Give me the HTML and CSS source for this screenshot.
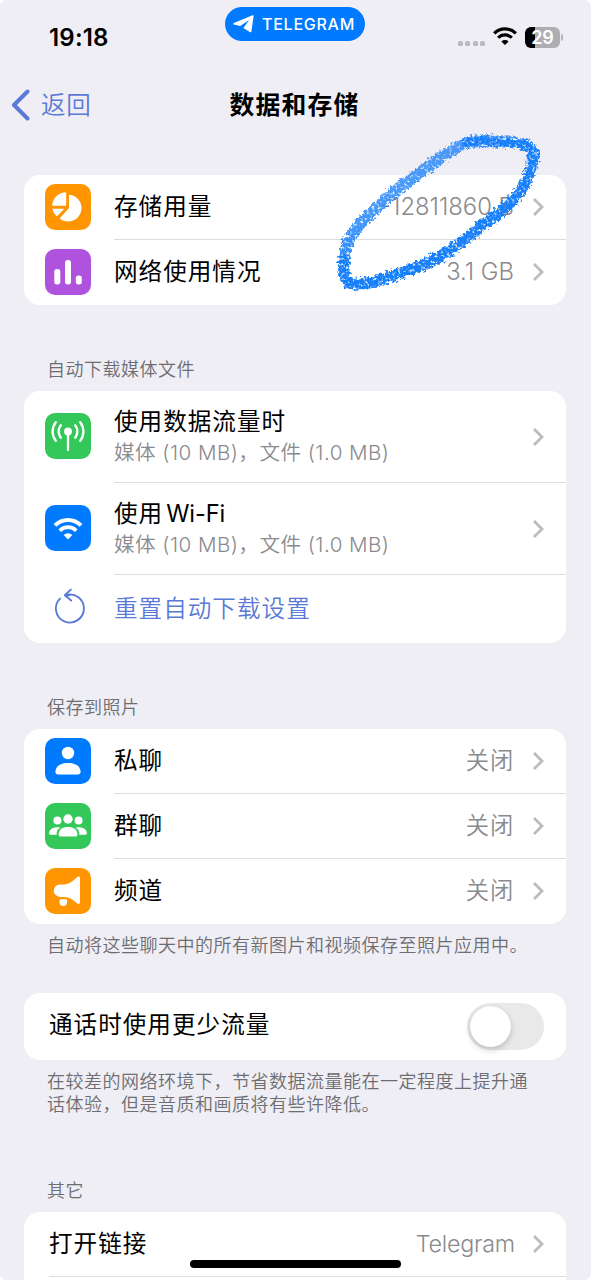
FILE: index.html
```html
<!DOCTYPE html>
<html lang="zh-CN">
<head>
<meta charset="utf-8">
<title>数据和存储</title>
<link rel="stylesheet" href="styles.css">
</head>
<body>
<svg class="defs" width="0" height="0">
  <symbol id="chev" viewBox="0 0 12 20"><path d="M2 2 L10 10 L2 18" fill="none" stroke="currentColor" stroke-width="2.8"/></symbol>
  <symbol id="wifi" viewBox="0 0 24 18">
    <path d="M1.2 6.4 A15.2 15.2 0 0 1 22.8 6.4" fill="none" stroke="currentColor" stroke-width="3.3"/>
    <path d="M5.2 10.8 A9.4 9.4 0 0 1 18.8 10.8" fill="none" stroke="currentColor" stroke-width="3.1"/>
    <path d="M12 18 L8.4 14.4 A5.2 5.2 0 0 1 15.6 14.4 Z" fill="currentColor"/>
  </symbol>
</svg>
<main class="screen">
  <header class="status">
    <time class="clock">19:18</time>
    <div class="pill">
      <svg width="21" height="18" viewBox="0 0 21 18"><path d="M19.6 .3 C20.4 0 20.7 .4 20.6 1 L18.4 16.4 C18.2 17.4 17.4 17.6 16.7 17.1 L10.4 13 L16.2 5 L7.2 11 L.9 9.6 C-.2 9.3 -.1 8.6 .9 8.1 Z" fill="#fff"/></svg>
      <span>TELEGRAM</span>
    </div>
    <div class="indicators">
      <div class="dots"><i></i><i></i><i></i><i></i></div>
      <svg class="net" width="24" height="18"><use href="#wifi"/></svg>
      <div class="battery"><span>29</span></div>
      <i class="nub"></i>
    </div>
  </header>
  <nav class="nav">
    <a class="back"><svg width="19" height="32" viewBox="0 0 19 32"><path d="M16.5 2.5 L3 16 L16.5 29.5" fill="none" stroke="currentColor" stroke-width="4" stroke-linecap="round" stroke-linejoin="round"/></svg><span>返回</span></a>
    <h1>数据和存储</h1>
  </nav>

  <section class="card">
    <div class="row">
      <svg class="icon orange" viewBox="0 0 46 46">
        <path d="M24 24 V10.7 A13.4 13.4 0 1 1 14.6 34.4 Z" fill="#fff"/>
        <path d="M21.2 21.7 H7.2 A14 14 0 0 1 21.2 8.2 Z" fill="#fff"/>
        <path d="M19.3 24.8 L11.8 32.6 A14 14 0 0 1 7.3 24.8 Z" fill="#fff"/>
      </svg>
      <div class="body"><span class="label">存储用量</span><span class="value num">-12811860 B</span><svg class="chev"><use href="#chev"/></svg></div>
    </div>
    <div class="row">
      <svg class="icon purple" viewBox="0 0 46 46"><g fill="#fff"><rect x="9.3" y="20" width="6" height="15.5" rx="2.7"/><rect x="20" y="11" width="6" height="24.5" rx="2.7"/><rect x="30.8" y="26.5" width="6" height="9" rx="2.7"/></g></svg>
      <div class="body"><span class="label">网络使用情况</span><span class="value num">3.1 GB</span><svg class="chev"><use href="#chev"/></svg></div>
    </div>
  </section>

  <h2 class="caption">自动下载媒体文件</h2>
  <section class="card">
    <div class="row tall">
      <svg class="icon green" viewBox="0 0 46 46">
        <circle cx="23" cy="18.5" r="3.9" fill="#fff"/>
        <g fill="none" stroke="#fff" stroke-width="2.3" stroke-linecap="round"><path d="M23 20 V37"/><path d="M15.8 12.3 A10 10 0 0 0 15.8 24.7"/><path d="M30.2 12.3 A10 10 0 0 1 30.2 24.7"/><path d="M10.8 9.2 A15 15 0 0 0 10.8 27.8"/><path d="M35.2 9.2 A15 15 0 0 1 35.2 27.8"/></g>
      </svg>
      <div class="body"><div class="stack"><span class="label">使用数据流量时</span><span class="detail">媒体 (10 MB)，文件 (1.0 MB)</span></div><svg class="chev"><use href="#chev"/></svg></div>
    </div>
    <div class="row tall">
      <svg class="icon blue" viewBox="0 0 46 46"><use href="#wifi" x="8.5" y="12.5" width="29" height="22" color="#fff"/></svg>
      <div class="body"><div class="stack"><span class="label">使用<span class="latin">Wi-Fi</span></span><span class="detail">媒体 (10 MB)，文件 (1.0 MB)</span></div><svg class="chev"><use href="#chev"/></svg></div>
    </div>
    <div class="row reset">
      <svg class="icon" viewBox="0 0 46 46"><g fill="none" stroke="#5b7ad6" stroke-width="1.9" stroke-linecap="round" stroke-linejoin="round"><path d="M15 13.6 A14 14 0 1 0 20.5 10.2 H24.5"/><path d="M25.8 4.6 L19.8 10.2 L26.2 15.6"/></g></svg>
      <div class="body"><span class="label link">重置自动下载设置</span></div>
    </div>
  </section>

  <h2 class="caption">保存到照片</h2>
  <section class="card">
    <div class="row">
      <svg class="icon blue" viewBox="0 0 46 46"><g fill="#fff"><circle cx="23" cy="15" r="6.2"/><path d="M10.4 33.6 C10.8 27.6 16.2 25 23 25 S35.2 27.6 35.6 33.6 C35.7 35.6 34.6 36.5 32.6 36.5 H13.4 C11.4 36.5 10.3 35.6 10.4 33.6 Z"/></g></svg>
      <div class="body"><span class="label">私聊</span><span class="value cjk">关闭</span><svg class="chev"><use href="#chev"/></svg></div>
    </div>
    <div class="row">
      <svg class="icon green" viewBox="0 0 46 46"><g fill="#fff"><circle cx="12.4" cy="17.6" r="4"/><circle cx="33.6" cy="17.6" r="4"/><circle cx="23" cy="16" r="4.7"/><path d="M13.6 31.4 C13.6 26.5 17.3 24 23 24 S32.4 26.5 32.4 31.4 C32.4 32.8 31.6 33.5 30.2 33.5 H15.8 C14.4 33.5 13.6 32.8 13.6 31.4 Z"/><path d="M11.7 31.8 H6 C4.6 31.8 4 31.2 4.1 30 C4.4 26.4 7.5 24.2 12.4 24.2 Q14.2 24.2 15.6 24.6 C12.8 26 11.5 28.3 11.7 31.8 Z"/><path d="M34.3 31.8 H40 C41.4 31.8 42 31.2 41.9 30 C41.6 26.4 38.5 24.2 33.6 24.2 Q31.8 24.2 30.4 24.6 C33.2 26 34.5 28.3 34.3 31.8 Z"/></g></svg>
      <div class="body"><span class="label">群聊</span><span class="value cjk">关闭</span><svg class="chev"><use href="#chev"/></svg></div>
    </div>
    <div class="row">
      <svg class="icon orange" viewBox="0 0 46 46"><g fill="#fff"><path d="M15 16.4 H19.5 C24 16.4 28.5 12.7 32 9.3 C33.4 8 35 8.4 35 10.4 V34 C35 36 33.4 36.6 32 35.2 C28.5 31.8 24 28.9 19.5 28.9 H15 A6.2 6.2 0 0 1 15 16.4 Z"/><path d="M15.6 31.2 H20.6 C21.5 31.2 22 31.7 22 32.6 V34.2 A3.7 3.7 0 0 1 14.6 34.2 V32.4 Q14.6 31.2 15.6 31.2 Z"/></g></svg>
      <div class="body"><span class="label">频道</span><span class="value cjk">关闭</span><svg class="chev"><use href="#chev"/></svg></div>
    </div>
  </section>
  <p class="note">自动将这些聊天中的所有新图片和视频保存至照片应用中。</p>

  <section class="card calls">
    <div class="row plain"><div class="body"><span class="label">通话时使用更少流量</span><div class="switch"><i></i></div></div></div>
  </section>
  <p class="note">在较差的网络环境下，节省数据流量能在一定程度上提升通<br>话体验，但是音质和画质将有些许降低。</p>

  <h2 class="caption other">其它</h2>
  <section class="card last">
    <div class="row plain"><div class="body"><span class="label">打开链接</span><span class="value word">Telegram</span><svg class="chev"><use href="#chev"/></svg></div></div>
    <div class="row plain"><div class="body"></div></div>
  </section>

  <svg class="scribble" width="591" height="320" viewBox="0 0 591 320">
    <defs>
      <filter id="crayon" x="-10%" y="-10%" width="120%" height="120%" color-interpolation-filters="sRGB">
        <feTurbulence type="fractalNoise" baseFrequency="0.35" numOctaves="3" seed="4" result="n"/>
        <feDisplacementMap in="SourceGraphic" in2="n" scale="9" xChannelSelector="R" yChannelSelector="G" result="d"/>
        <feColorMatrix in="n" type="matrix" values="0 0 0 0 0  0 0 0 0 0  0 0 0 0 0  0 0 3.5 0 -0.6" result="m"/>
        <feComposite in="d" in2="m" operator="in"/>
        <feGaussianBlur stdDeviation="0.5"/>
      </filter>
      <linearGradient id="ink" gradientUnits="userSpaceOnUse" x1="400" y1="170" x2="440" y2="235"><stop offset="0" stop-color="#1a80fa" stop-opacity=".75"/><stop offset="1" stop-color="#1a80fa"/></linearGradient>
    </defs>
    <g transform="translate(1 1)" filter="url(#crayon)" fill="none" stroke-linecap="round" stroke-linejoin="round">
      <path stroke="url(#ink)" stroke-width="11.5" d="M465 142 C445 151 436 159 420 171 C405 182 388 193 374 209 C356 224 344 239 343 258 C342 273 343 282 353 283 C368 284 389 276 411 268 C438 259 461 242 479 226 C499 213 514 199 523 184 C530 174 532 161 532 153 C531 143 515 141 499 141 C485 140 474 139 465 142"/>
      <path stroke="#1680fc" stroke-width="8.5" d="M465 142 C475 138 485 141 499 141 C515 141 531 143 532 153 C532 161 530 174 523 184 M343 258 C342 273 343 282 353 283 C368 284 389 276 411 268"/>
    </g>
  </svg>
  <div class="home"></div>
</main>
</body>
</html>
```
FILE: styles.css
```css
* { box-sizing: border-box; }
html { background: #fff; }
body { margin: 0; font-family: Inter, "Noto Sans CJK SC", sans-serif; color: #000; overflow: hidden; }
.defs { position: absolute; }
.screen { position: relative; width: 591px; height: 1280px; background: #efeef5; border-radius: 6px; overflow: hidden; padding: 0 25px 0 24px; }
h1, h2, p { margin: 0; font-weight: 400; }

.status { height: 75px; margin: 0 -25px 0 -24px; display: grid; grid-template-columns: 225px 140px 1fr; align-items: start; }
.clock { padding: 23px 0 0 49px; font-size: 24px; line-height: 30px; font-weight: 600; letter-spacing: .2px; }
.pill { margin-top: 7px; height: 34px; border-radius: 17px; background: #007aff; color: #fff; display: flex; align-items: center; gap: 8px; padding-left: 8px; font-size: 16px; font-weight: 500; letter-spacing: .75px; }
.indicators { display: flex; justify-content: flex-end; padding: 27px 28px 0 0; height: 48px; }
.dots { display: flex; gap: 2.5px; padding: 14px 8px 0 0; }
.dots i { width: 5px; height: 5px; border-radius: 1.5px; background: #b9b9be; }
.net { margin: 0 8px 0 0; }
.battery { width: 35px; height: 21px; border-radius: 6px; background: linear-gradient(90deg, #000 10px, #aeaeb2 10px); color: #fff; font-size: 18px; font-weight: 600; line-height: 21px; text-align: center; }
.nub { width: 2px; height: 7px; margin: 7px 0 0 1px; border-radius: 0 2px 2px 0; background: #b6b6ba; }

.nav { height: 100px; margin: 0 -25px 0 -24px; display: grid; grid-template-columns: 1fr auto 1fr; align-items: start; padding-top: 14px; }
.back { display: flex; align-items: center; gap: 11px; padding-left: 11px; height: 32px; color: #5b7ad6; font-size: 24.5px; line-height: 28px; letter-spacing: .8px; font-weight: 350; }
.back span { margin-top: -1px; }
h1 { font-size: 24.8px; line-height: 32px; font-weight: 600; letter-spacing: 1.2px; grid-column: 2; margin-left: -2px; }

.card { background: #fff; border-radius: 16px; overflow: hidden; }
.row { height: 65px; display: flex; align-items: center; padding-left: 21px; }
.row.tall { height: 92px; }
.row.reset { height: 68px; }
.icon { width: 46px; height: 46px; border-radius: 10px; margin: 0 23px 2px 0; flex: none; }
.orange { background: #ff9500; }
.purple { background: #af52de; }
.green { background: #34c759; }
.blue { background: #007aff; }
.body { flex: 1; align-self: stretch; display: flex; align-items: center; padding-right: 22px; border-bottom: 1px solid #dddde0; }
.row:last-child .body { border-bottom: 0; padding-bottom: 1px; }
.label { font-size: 23.6px; line-height: 34px; letter-spacing: 1px; margin-right: auto; }
.latin { letter-spacing: -.1px; margin-left: 3px; }
.link { color: #5b7ad6; font-weight: 350; }
.value { font-size: 23.3px; line-height: 34px; color: #8a8a8e; font-weight: 350; }
.num { font-size: 23.8px; }
.word { letter-spacing: -.2px; margin-right: -1px; }
.cjk { letter-spacing: .8px; }
.chev { width: 12px; height: 20px; color: #bcbcc0; margin-left: 18px; }
.stack { display: flex; flex-direction: column; margin-right: auto; padding-top: 1px; }
.stack .label { line-height: 32px; }
.detail { font-size: 20.6px; line-height: 30px; letter-spacing: .45px; color: #8a8a8e; font-weight: 350; }
.caption { height: 86px; padding: 52px 23px 0; font-size: 18px; line-height: 26px; letter-spacing: .5px; color: #6d6d72; font-weight: 350; }
.note { padding: 10px 23px 0; font-size: 18px; line-height: 23px; letter-spacing: .5px; color: #6d6d72; white-space: nowrap; font-weight: 350; }
.calls { margin-top: 36px; }
.row.plain { padding-left: 25px; }
.calls .row { height: 67px; }
.calls .label { margin-top: -3px; }
.switch { width: 77px; height: 47px; border-radius: 24px; background: #e9e9ea; padding: 3px; }
.switch i { display: block; width: 41px; height: 41px; border-radius: 50%; background: #fff; box-shadow: 0 3px 6px rgba(0,0,0,.18), 0 0 1px rgba(0,0,0,.15); }
.other { height: 96px; padding-top: 62px; }
.scribble { position: absolute; left: 0; top: 0; }
.home { position: absolute; left: 190px; top: 1260px; width: 211px; height: 8px; border-radius: 4px; background: #000; }
```
